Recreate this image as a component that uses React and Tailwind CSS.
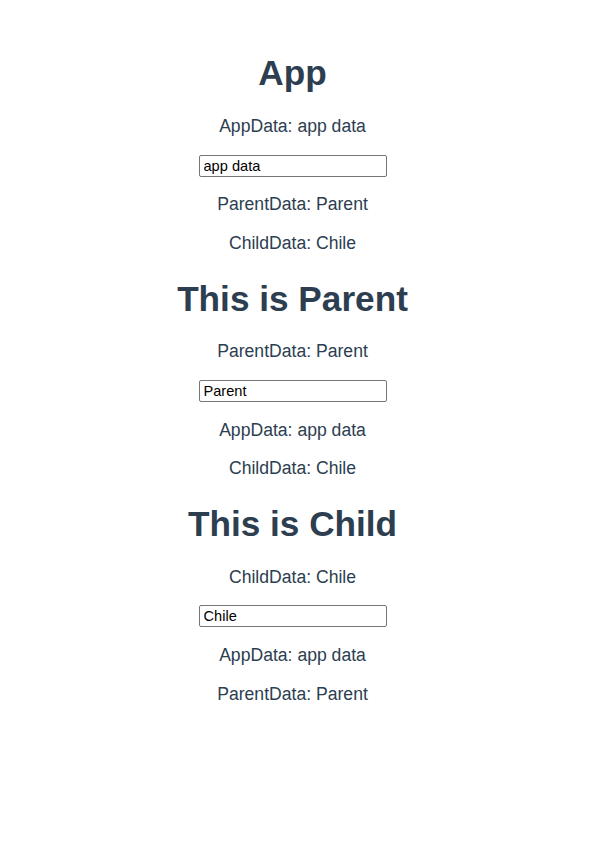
import { useState } from 'react'

function Line({ children, className = '' }) {
  return <p className={`h-[20px] text-[17.6px] leading-[20px] ${className}`}>{children}</p>
}

function Heading({ children, className = '' }) {
  return <h1 className={`h-[42px] text-[35.2px] font-bold leading-[42px] ${className}`}>{children}</h1>
}

function Field({ value, onChange, className = '' }) {
  return (
    <div className={`flex justify-center ${className}`}>
      <input
        value={value}
        onChange={(e) => onChange(e.target.value)}
        className="h-[22px] w-[188px] rounded-[2px] border border-[#767676] bg-white px-[4px] text-[14.6px] text-black outline-none"
      />
    </div>
  )
}

export default function App() {
  const [appData, setAppData] = useState('app data')
  const [parentData, setParentData] = useState('Parent')
  const [childData, setChildData] = useState('Chile')

  return (
    <div className="min-h-[857px] bg-white pr-[24px] pt-[52px] text-center text-[#2c3e50] [font-family:'Liberation_Sans',Arial,sans-serif]">
      <Heading>App</Heading>
      <Line className="mt-[22px]">AppData: {appData}</Line>
      <Field value={appData} onChange={setAppData} className="mt-[19px]" />
      <Line className="mt-[17px]">ParentData: {parentData}</Line>
      <Line className="mt-[19px]">ChildData: {childData}</Line>

      <Heading className="mt-[25px]">This is Parent</Heading>
      <Line className="mt-[21px]">ParentData: {parentData}</Line>
      <Field value={parentData} onChange={setParentData} className="mt-[19px]" />
      <Line className="mt-[18px]">AppData: {appData}</Line>
      <Line className="mt-[18px]">ChildData: {childData}</Line>

      <Heading className="mt-[25px]">This is Child</Heading>
      <Line className="mt-[22px]">ChildData: {childData}</Line>
      <Field value={childData} onChange={setChildData} className="mt-[18px]" />
      <Line className="mt-[18px]">AppData: {appData}</Line>
      <Line className="mt-[19px]">ParentData: {parentData}</Line>
    </div>
  )
}
